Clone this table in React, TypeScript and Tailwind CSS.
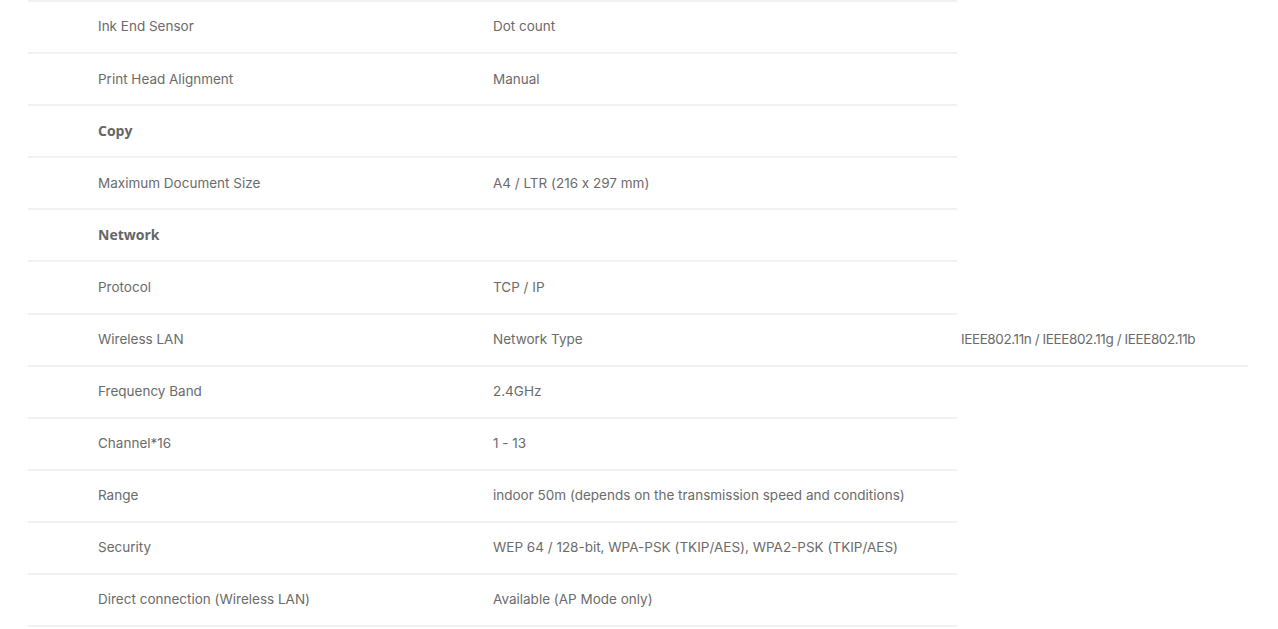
const rows: { label: string; value?: string; extra?: string; heading?: boolean }[] = [
  { label: "Ink End Sensor", value: "Dot count" },
  { label: "Print Head Alignment", value: "Manual" },
  { label: "Copy", heading: true },
  { label: "Maximum Document Size", value: "A4 / LTR (216 x 297 mm)" },
  { label: "Network", heading: true },
  { label: "Protocol", value: "TCP / IP" },
  { label: "Wireless LAN", value: "Network Type", extra: "IEEE802.11n / IEEE802.11g / IEEE802.11b" },
  { label: "Frequency Band", value: "2.4GHz" },
  { label: "Channel*16", value: "1 - 13" },
  { label: "Range", value: "indoor 50m (depends on the transmission speed and conditions)" },
  { label: "Security", value: "WEP 64 / 128-bit, WPA-PSK (TKIP/AES), WPA2-PSK (TKIP/AES)" },
  { label: "Direct connection (Wireless LAN)", value: "Available (AP Mode only)" },
];

export default function App() {
  return (
    <div className="min-h-screen bg-white pl-[28px] text-[13.5px] text-[#6b6b6b] font-['Inter','Noto_Sans',sans-serif] [font-feature-settings:'calt'_0]">
      <div className="h-[2px] w-[929px] bg-[#f1f1f1]" />
      {rows.map((r) => (
        <div key={r.label} className="flex">
          <div
            className={
              "flex h-[52.1px] w-[465px] items-center border-b-2 border-[#f1f1f1] pl-[70px] pb-[1px] " +
              (r.heading ? "font-['Open_Sans',sans-serif] font-bold text-[14px] text-[#666]" : "")
            }
          >
            {r.label}
          </div>
          <div className="flex h-[52.1px] w-[464px] items-center border-b-2 border-[#f1f1f1] pb-[1px]">
            {r.value}
          </div>
          {r.extra && (
            <div className="flex h-[52.1px] w-[291px] items-center border-b-2 border-[#f1f1f1] pl-[4px] pb-[1px] tracking-[-0.4px]">
              {r.extra}
            </div>
          )}
        </div>
      ))}
    </div>
  );
}
